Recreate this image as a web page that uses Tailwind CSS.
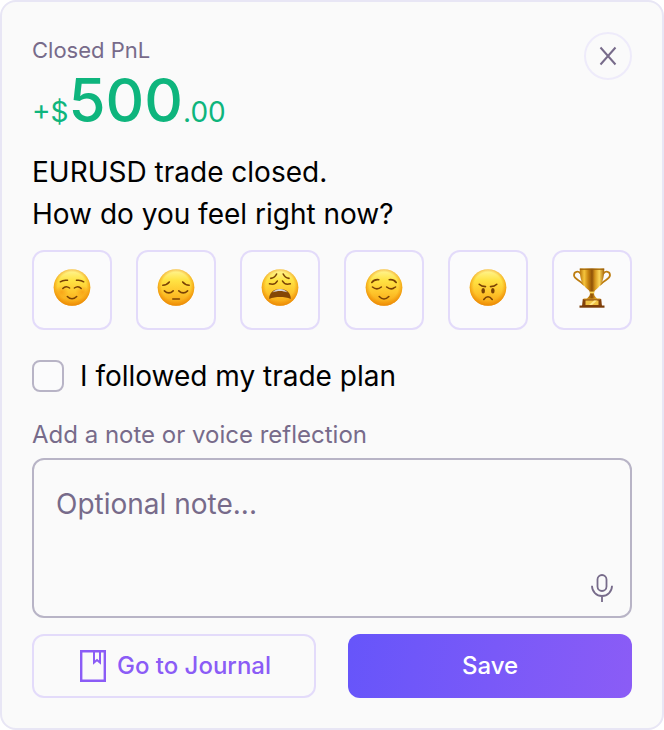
<!DOCTYPE html>
<html lang="en">
<head>
<meta charset="utf-8">
<meta name="viewport" content="width=device-width, initial-scale=1">
<title>Closed trade</title>
<script src="https://cdn.jsdelivr.net/npm/@tailwindcss/browser@4"></script>
</head>
<body class="bg-white font-['Inter',sans-serif] text-black">
<svg class="absolute size-0" aria-hidden="true">
  <defs>
    <linearGradient id="face" x1="0" y1="0" x2="0" y2="1">
      <stop offset="0" stop-color="#fff69a"/><stop offset=".3" stop-color="#ffe344"/><stop offset=".65" stop-color="#fec42b"/><stop offset="1" stop-color="#f59f10"/>
    </linearGradient>
    <radialGradient id="rim" cx=".5" cy=".47" r=".54">
      <stop offset=".72" stop-color="#f08a00" stop-opacity="0"/><stop offset="1" stop-color="#e88506" stop-opacity=".85"/>
    </radialGradient>
    <radialGradient id="blush"><stop offset="0" stop-color="#f5900a" stop-opacity=".6"/><stop offset="1" stop-color="#f5900a" stop-opacity="0"/></radialGradient>
    <linearGradient id="gold" x1="0" y1="0" x2="1" y2="0">
      <stop offset="0" stop-color="#b8740b"/><stop offset=".18" stop-color="#f6c53c"/><stop offset=".34" stop-color="#c98510"/><stop offset=".5" stop-color="#8f5207"/><stop offset=".62" stop-color="#d4951c"/><stop offset=".8" stop-color="#fbd75a"/><stop offset="1" stop-color="#a8650a"/>
    </linearGradient>
    <g id="head"><circle cx="22" cy="19.5" r="18.3" fill="url(#face)"/><circle cx="22" cy="19.5" r="18.3" fill="url(#rim)"/></g>
  </defs>
</svg>
<main class="rounded-2xl border-2 border-[#e8e6f5] bg-[#fafafa] p-[30px]">
  <header class="flex items-start justify-between">
    <div>
      <h1 class="text-[22px] leading-9 text-[#776b8a]">Closed PnL</h1>
      <p class="flex items-baseline text-[28px] leading-16 text-[#0eb57d]"><span>+$</span><span class="text-[60px] font-medium">500</span><span>.00</span></p>
    </div>
    <button type="button" aria-label="Close" class="flex size-12 items-center justify-center rounded-full border-2 border-[#eeebfa] text-[#776b8a]">
      <svg class="size-6" viewBox="0 0 24 24" fill="none" stroke="currentColor" stroke-width="2"><path d="M4.5 3.5l15 17M19.5 3.5l-15 17"/></svg>
    </button>
  </header>
  <p class="mt-[7px] text-[28px] leading-[42px]">EURUSD trade closed.<br>How do you feel right now?</p>
  <div class="mt-[15px] grid grid-cols-6 gap-6" role="group" aria-label="How do you feel right now?">
    <button type="button" aria-label="Happy" class="flex aspect-square items-center justify-center rounded-xl border-2 border-[#e3dbfa] bg-[#fbfbfc]">
      <svg class="size-11" viewBox="0 0 44 44" fill="none" stroke="#7a4205" stroke-width="1.5" stroke-linecap="round"><use href="#head" stroke="none"/><g stroke="none" fill="url(#blush)"><ellipse cx="11.5" cy="24" rx="7" ry="6"/><ellipse cx="32.5" cy="24" rx="7" ry="6"/></g><path d="M10.3 13.8q3-2.200 7.200-1.500M26.500 12.300q4.200-.7 7.200 1.500M12.800 20.500q3-3.400 6.800-.5M24.400 20q3.800-2.900 6.800.5M17.300 28.500q4.700 4.600 9.400 0"/></svg>
    </button>
    <button type="button" aria-label="Sad" class="flex aspect-square items-center justify-center rounded-xl border-2 border-[#e3dbfa] bg-[#fbfbfc]">
      <svg class="size-11" viewBox="0 0 44 44" fill="none" stroke="#7a4205" stroke-width="1.6" stroke-linecap="round"><use href="#head" stroke="none"/><path d="M8.8 17.2q4.2-.2 6.5-3.2M28.7 14q2.3 3 6.5 3.2M10.400 22.800q4.400 4.200 8.800 0M24.800 22.800q4.400 4.200 8.800 0M18.800 31h6.600"/></svg>
    </button>
    <button type="button" aria-label="Exhausted" class="flex aspect-square items-center justify-center rounded-xl border-2 border-[#e3dbfa] bg-[#fbfbfc]">
      <svg class="size-11" viewBox="0 0 44 44" fill="none" stroke="#7a4205" stroke-width="1.6" stroke-linecap="round"><use href="#head" stroke="none"/><path d="M12.800 10.400q4.200-.7 5.800-4.400M25.200 6q1.600 3.700 5.800 4.400M11.500 15.800q5.600 1.600 7.800-2.800M24.500 13q2.200 4.400 7.800 2.800"/><path d="M11.200 31c-.2-6 4.200-10 10.800-10s11 4 10.800 10c-6.400-2.600-15.200-2.600-21.600 0z" fill="#854706" stroke="none"/><path d="M14.500 24.600c1.700-2.300 4.500-3.600 7.500-3.600s5.800 1.300 7.500 3.600c-4.500-2-10.500-2-15 0z" fill="#d9d8dc" stroke="none"/></svg>
    </button>
    <button type="button" aria-label="Relieved" class="flex aspect-square items-center justify-center rounded-xl border-2 border-[#e3dbfa] bg-[#fbfbfc]">
      <svg class="size-11" viewBox="0 0 44 44" fill="none" stroke="#7a4205" stroke-width="1.6" stroke-linecap="round"><use href="#head" stroke="none"/><path d="M9.800 14.500q2.400-3.400 7-2.800M27.200 11.700q4.600-.6 7 2.800M10.500 19q4.400 3.700 8.800 0M24.700 19q4.400 3.700 8.800 0M17.200 28.500q4.800 5 9.600 0"/></svg>
    </button>
    <button type="button" aria-label="Angry" class="flex aspect-square items-center justify-center rounded-xl border-2 border-[#e3dbfa] bg-[#fbfbfc]">
      <svg class="size-11" viewBox="0 0 44 44" fill="none" stroke="#7a4205" stroke-width="1.6" stroke-linecap="round"><use href="#head" stroke="none"/><path d="M13.200 16.300q2.200 2.300 6.300 2.300M24.500 18.600q4.100 0 6.300-2.300M17.800 31.500q4.200-5.400 8.400 0"/><g fill="#7a4205" stroke="none"><ellipse cx="17.2" cy="22.8" rx="1.8" ry="2.8"/><ellipse cx="26.8" cy="22.8" rx="1.8" ry="2.8"/></g></svg>
    </button>
    <button type="button" aria-label="Winning" class="flex aspect-square items-center justify-center rounded-xl border-2 border-[#e3dbfa] bg-[#fbfbfc]">
      <svg class="size-11" viewBox="0 0 44 44" fill="none">
        <path d="M10.500 5.500C8.500 2.800 4 3 4 7.200c0 4 5.500 4.300 9.500 9.300M33.500 5.500c2-2.700 6.500-2.500 6.500 1.700 0 4-5.500 4.300-9.500 9.300" stroke="#bd7d10" stroke-width="1.8" stroke-linecap="round"/>
        <path d="M9.800.6h24.400c.2 9.400-2 16.400-7.400 20.400-2 1.500-2.800 2.500-2.800 4.500 0 2.500 2 3.500 3.500 5.500h-11c1.500-2 3.500-3 3.500-5.500 0-2-.8-3-2.800-4.500C11.800 17 9.600 10 9.800.6z" fill="url(#gold)"/>
        <path d="M9.800.6h24.400v1.200H9.800z" fill="#9b5f0a"/><path d="M19.800 23.600h4.400v1.800h-4.400z" fill="#ffd956"/>
        <path d="M12.800 31h18.400l.8 7H12z" fill="#83420b"/><path d="M9.500 37.500h25v2.200h-25z" fill="#7a3c08"/><path d="M15.500 32.500h13v4.500h-13z" fill="#f0c245"/><path d="M19 37l5-4.500h3L22 37z" fill="#ffe78a"/><path d="M13.500 30.500h17v1h-17z" fill="#d69a24"/>
      </svg>
    </button>
  </div>
  <label class="mt-[30px] flex items-center gap-4 text-[28px] leading-8">
    <input type="checkbox" class="size-8 shrink-0 appearance-none rounded-lg border-2 border-[#b8b4c6] bg-[#fbfbfc] checked:bg-[#8b5cf6]">
    I followed my trade plan
  </label>
  <label for="note" class="mt-7 block text-2xl leading-[30px] text-[#776b8a]">Add a note or voice reflection</label>
  <div class="relative mt-2">
    <textarea id="note" placeholder="Optional note..." class="block h-40 w-full resize-none rounded-xl border-2 border-[#b8b4c6] px-[22px] py-6 text-[28px] leading-10 placeholder:text-[#776b8a]"></textarea>
    <button type="button" aria-label="Record voice note" class="absolute right-[18px] bottom-[14px] text-[#776b8a]">
      <svg class="h-8 w-6" viewBox="0 0 24 32" fill="none" stroke="currentColor" stroke-width="1.8"><rect x="7.5" y="3" width="9" height="16" rx="4.5"/><path d="M2 13.700v.3a10 10 0 0 0 20 0v-.3M12 24v6"/></svg>
    </button>
  </div>
  <footer class="mt-4 grid grid-cols-2 gap-8 text-2xl font-medium">
    <a href="#journal" class="flex h-16 items-center justify-center gap-2 rounded-xl border-2 border-[#e3dbfa] text-[#8b5cf6]">
      <svg class="size-8" viewBox="0 0 32 32" fill="none" stroke="currentColor" stroke-width="2.4"><path d="M4.200 1.200h23.600v29.600H4.200z"/><path d="M17 1v11.500l3-2.500 3 2.500V1" stroke-width="2"/></svg>
      Go to Journal
    </a>
    <button type="button" class="h-16 rounded-xl bg-linear-100 from-[#6655fa] to-[#8b5cf6] text-white">Save</button>
  </footer>
</main>
</body>
</html>
